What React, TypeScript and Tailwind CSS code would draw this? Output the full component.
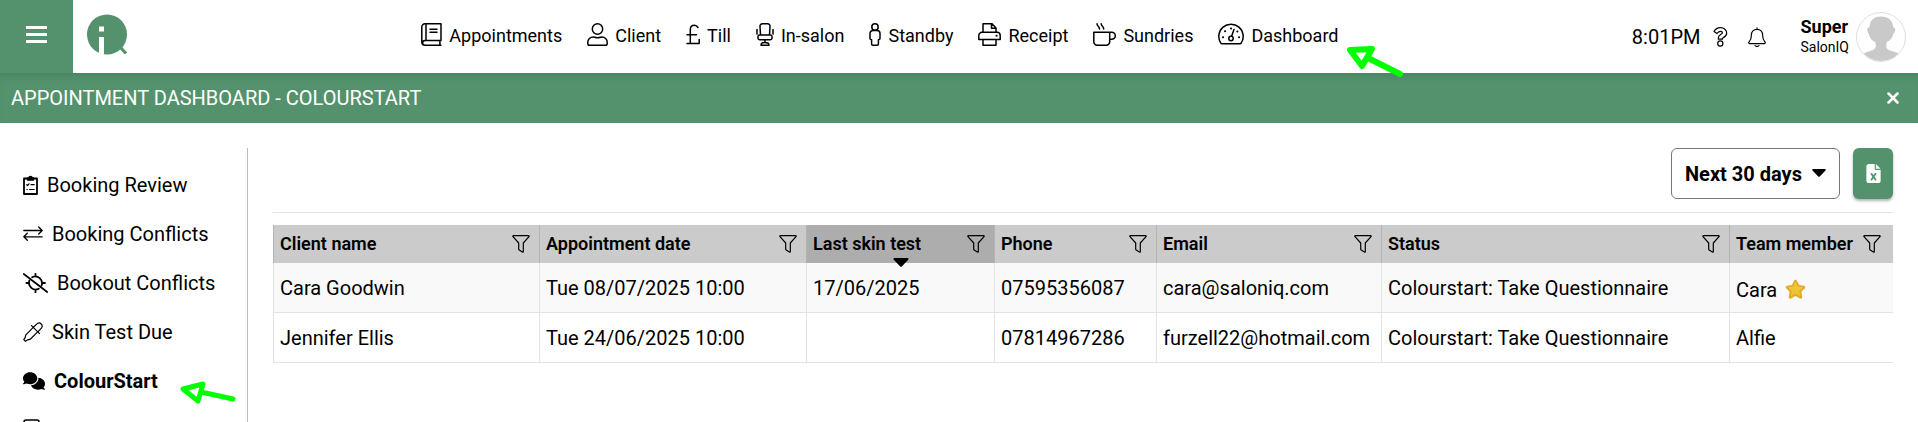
import type { ReactNode } from 'react'
import { FaComments, FaFileExcel } from 'react-icons/fa6'

const Icon = ({
  w,
  h,
  className = '',
  children,
}: {
  w: number
  h: number
  className?: string
  children: ReactNode
}) => (
  <svg
    width={w}
    height={h}
    viewBox={`0 0 ${w} ${h}`}
    fill="none"
    stroke="currentColor"
    strokeWidth="1.5"
    strokeLinecap="round"
    strokeLinejoin="round"
    aria-hidden="true"
    className={`shrink-0 ${className}`}
  >
    {children}
  </svg>
)

const BookIcon = () => (
  <Icon w={21} h={23}>
    <path d="M20 17.5V.8H4A3.2 3.2 0 0 0 .8 4v15A3.2 3.2 0 0 0 4 22.2h16M20 17.5H4a2.3 2.3 0 0 0 0 4.7M18.9 17.5v4.7M5 .8v16.7M9 6.3h7M9 9.2h7" />
  </Icon>
)

const UserIcon = () => (
  <Icon w={21} h={23}>
    <circle cx="10.5" cy="6" r="5.2" />
    <path d="M2.6 22.2h15.8a1.8 1.8 0 0 0 1.8-1.8v-1.2a5.3 5.3 0 0 0-5.3-5.3c-1.2 0-2 .8-4.4.8s-3.2-.8-4.4-.8A5.3 5.3 0 0 0 .8 19.2v1.2a1.8 1.8 0 0 0 1.8 1.8Z" />
  </Icon>
)

const PoundIcon = () => (
  <Icon w={14} h={23}>
    <path d="M12 4.500C11 2.900 9.800 2.300 8.400 2.300 5.700 2.300 4.300 4.200 4.300 6.800V20.200M1 11.700h9.500M1 20.500h12.200v-4" />
  </Icon>
)

const ChairIcon = () => (
  <Icon w={18} h={23}>
    <path d="M4.500 12 4 3.300A2.300 2.300 0 0 1 6.300.8h5.400A2.300 2.300 0 0 1 14 3.300L13.500 12M1 6.500V11M17 6.500V11M3.500 12h11a1.500 1.500 0 0 1 1.500 1.500V15a1.800 1.800 0 0 1-1.800 1.800H3.800A1.800 1.800 0 0 1 2 15v-1.500A1.500 1.500 0 0 1 3.500 12ZM9 17v2.500M5 22.200c0-1.600 1.500-2.700 4-2.700s4 1.100 4 2.700Z" />
  </Icon>
)

const PersonIcon = () => (
  <Icon w={12} h={23}>
    <circle cx="6" cy="4" r="3.200" />
    <path d="M4 7.500h4a3 3 0 0 1 3 3v4.700a1.600 1.600 0 0 1-1.600 1.600V21a1.200 1.200 0 0 1-1.200 1.200H3.800A1.200 1.200 0 0 1 2.600 21v-4.200A1.600 1.600 0 0 1 1 15.200v-4.700a3 3 0 0 1 3-3Z" />
  </Icon>
)

const PrinterIcon = () => (
  <Icon w={23} h={23}>
    <path d="M5 9V.8h9L18 5v4M13.500 1v4.200H18M5 16.500H.8v-4A3.200 3.200 0 0 1 4 9.300h15a3.200 3.200 0 0 1 3.200 3.200v4H18M5 16.500h13v5.700H5Z" />
    <path d="M18.500 12.700h.1" strokeWidth="2" />
  </Icon>
)

const CoffeeIcon = () => (
  <Icon w={23} h={23}>
    <path d="M.8 9.200h15.900v9.500a3.500 3.500 0 0 1-3.500 3.500H4.300a3.500 3.500 0 0 1-3.500-3.500ZM16.700 9.200h2.100a3.400 3.400 0 0 1 0 7h-2.100M4 .8c0 2.700 2.500 2.300 2.500 5.200M8.200.8c0 2.700 2.500 2.300 2.500 5.200" />
  </Icon>
)

const GaugeIcon = () => (
  <Icon w={26} h={23}>
    <path d="M4 20.700h18a1.500 1.500 0 0 0 1.300-.8A12.200 12.200 0 1 0 2.700 19.900a1.500 1.500 0 0 0 1.300.8ZM13.600 13.300 16 6.500" />
    <circle cx="13" cy="15.500" r="2.200" />
    <path d="M5 14.200h.1M7 8.200h.1M13 5.500h.1M19.300 8.500h.1M21 14.200h.1" strokeWidth="2" />
  </Icon>
)

const FilterIcon = () => (
  <Icon w={18} h={18}>
    <path
      d="M1.400.7h15.200c.5 0 .8.6.4 1L11.300 8v8.600c0 .5-.5.8-.9.500L7.200 15a1 1 0 0 1-.5-.8V8L1 1.700C.6 1.300.9.700 1.400.7Z"
      strokeWidth="1.200"
    />
  </Icon>
)

const nav = [
  { label: 'Appointments', icon: <BookIcon /> },
  { label: 'Client', icon: <UserIcon /> },
  { label: 'Till', icon: <PoundIcon /> },
  { label: 'In-salon', icon: <ChairIcon /> },
  { label: 'Standby', icon: <PersonIcon /> },
  { label: 'Receipt', icon: <PrinterIcon /> },
  { label: 'Sundries', icon: <CoffeeIcon /> },
  { label: 'Dashboard', icon: <GaugeIcon /> },
]

const menu = [
  {
    label: 'Booking Review',
    icon: (
      <Icon w={15} h={20}>
        <path d="M1 3.500h13V19H1Z" strokeWidth="1.800" />
        <path d="M4.500 3h1.500a1.500 1.500 0 0 1 3 0h1.500v2h-6Z" fill="currentColor" />
        <path d="m3.700 9.700.8.800 1.500-1.700M8 9.700h3.200M3.900 14.500h.4M6.500 14.500h4.700" strokeWidth="1.200" />
      </Icon>
    ),
  },
  {
    label: 'Booking Conflicts',
    icon: (
      <Icon w={20} h={20}>
        <path d="M.8 6.500h18.400M15.700 3l3.500 3.500-3.500 3.500M19.200 12.800H.8M4.300 9.300.8 12.800l3.500 3.500" strokeWidth="1.300" />
      </Icon>
    ),
  },
  {
    label: 'Bookout Conflicts',
    icon: (
      <Icon w={25} h={20}>
        <path d="m.8 1 23.400 18" strokeWidth="1.700" />
        <path d="M12.500.8v2.600M12.500 16.600v2.700M3.500 10H6M19.300 10h2.700M9.200 4.300a6.700 6.700 0 0 1 9.400 8.200M15.800 15.700A6.700 6.700 0 0 1 6.400 7.500" strokeWidth="1.800" />
      </Icon>
    ),
  },
  {
    label: 'Skin Test Due',
    icon: (
      <Icon w={20} h={20}>
        <path
          d="m10.300 5.200 4-3.600a3.100 3.100 0 0 1 4.300 4.300l-3.700 4M8.500 3.700l8 8M10 5.700l-6.900 6.900c-.8.800-.5 2.300-1.100 3.200L.8 17.600l1.700 1.700 1.800-1.200c.9-.6 2.400-.300 3.200-1.100l6.900-6.900"
          strokeWidth="1.200"
        />
      </Icon>
    ),
  },
  { label: 'ColourStart', icon: <FaComments size={22} className="shrink-0" />, active: true },
]

const columns = [
  { label: 'Client name', width: 'w-[266px]' },
  { label: 'Appointment date', width: 'w-[267px]' },
  { label: 'Last skin test', width: 'w-[188px]', sorted: true },
  { label: 'Phone', width: 'w-[162px]' },
  { label: 'Email', width: 'w-[225px]' },
  { label: 'Status', width: '' },
  { label: 'Team member', width: 'w-[164px]' },
]

const rows = [
  ['Cara Goodwin', 'Tue 08/07/2025 10:00', '17/06/2025', '07595356087', 'cara@saloniq.com', 'Colourstart: Take Questionnaire', 'Cara'],
  ['Jennifer Ellis', 'Tue 24/06/2025 10:00', '', '07814967286', 'furzell22@hotmail.com', 'Colourstart: Take Questionnaire', 'Alfie'],
]

const Star = () => (
  <svg width="21" height="21" viewBox="0 0 21 21" role="img" aria-label="Requested">
    <path
      d="M10.500.7c.8 0 1.200.6 1.500 1.200l2.100 4.200 4.700.7c1.500.2 2 1.500 1 2.500l-3.400 3.500.8 5c.2 1.500-.9 2.300-2.200 1.600l-4.500-2.300-4.500 2.300c-1.300.7-2.400-.1-2.200-1.600l.8-5L1.200 9.300c-1-1-.5-2.300 1-2.500l4.700-.7L9 1.900c.3-.6.700-1.200 1.500-1.200Z"
      fill="#e5a82e"
    />
    <path d="M10.500 2.500 13 7.400l5.200.9-3.900 3.700.9 5-4.700-2.400-4.700 2.400.9-5-3.900-3.700L8 7.400Z" fill="#eec534" />
  </svg>
)

function Header() {
  return (
    <header className="flex h-[73px] shrink-0 items-center">
      <button type="button" aria-label="Menu" className="flex h-full w-[73px] items-center justify-center bg-[#53926d] text-white">
        <svg width="21" height="17" viewBox="0 0 21 17" fill="currentColor" className="mb-1">
          <path d="M0 0h21v3H0zM0 7h21v3H0zM0 14h21v3H0z" />
        </svg>
      </button>
      <svg width="41" height="42" viewBox="0 0 41 42" className="mb-1 ml-3.5" role="img" aria-label="SalonIQ">
        <circle cx="20" cy="20.500" r="20" fill="#53926d" />
        <path d="m35 35 4.500 4.500" stroke="#fff" strokeWidth="7" />
        <path d="m33.500 33.500 5.500 6" stroke="#53926d" strokeWidth="3.200" />
        <path d="M12 12.500h5v5h-5zM12 23h5v18l-5-2z" fill="#fff" />
      </svg>
      <nav className="flex flex-1 justify-center gap-[25px]">
        {nav.map(({ label, icon }) => (
          <a key={label} href="#" className="flex items-center gap-[7px] pb-1 text-lg leading-6">
            {icon}
            <span className="pt-0.5">{label}</span>
          </a>
        ))}
      </nav>
      <div className="flex items-center pr-3">
        <time className="text-xl leading-6">8:01PM</time>
        <button type="button" aria-label="Help" className="ml-3">
          <Icon w={15} h={20}>
            <path
              d="M1 4.500C2.500 2 4.700.7 7.400.7c3.500 0 6.300 2.200 6.300 5.200 0 4.300-4.300 4.300-4.300 5.700v.6H5.300v-1.100c0-3.500 4.100-3.700 4.100-5.300 0-.9-.9-1.500-2-1.500-1.500 0-2.300.8-3.400 2.200Z"
              strokeWidth="1.200"
            />
            <circle cx="7.300" cy="16.500" r="2.600" strokeWidth="1.200" />
          </Icon>
        </button>
        <button type="button" aria-label="Notifications" className="ml-5">
          <Icon w={18} h={20}>
            <path d="M9 .8v1.500M9 2.300c-3.400 0-5.600 2.500-5.600 5.700 0 4.500-1 5.500-2.300 6.900-.7.800-.300 1.700.6 1.700h14.600c.9 0 1.300-.9.600-1.700-1.300-1.400-2.300-2.400-2.300-6.900 0-3.200-2.200-5.700-5.600-5.700ZM7 18.700c.8 1 3.200 1 4 0" strokeWidth="1.200" />
          </Icon>
        </button>
        <div className="ml-[35px]">
          <div className="text-lg leading-5 font-bold">Super</div>
          <div className="text-sm leading-5">SalonIQ</div>
        </div>
        <svg width="50" height="50" viewBox="0 0 50 50" className="ml-[7px]" role="img" aria-label="Super">
          <defs>
            <clipPath id="avatar">
              <circle cx="25" cy="25" r="24" />
            </clipPath>
          </defs>
          <path
            d="M25 4.500C17 4.500 14 9 13.700 14.500c-1.200 1-2.500 2-2.500 3.500s.8 2.500 1.500 4c1 4 3 6.500 6.500 8 .8 3 1 6-1.200 7.500-4 2-8.500 2-11.500 5.500L12 50h26l6-7c-3-3.500-8-3.500-12-5.500-2.200-1.500-2-4.500-1.200-7.500 3.500-1.500 5.500-4 6.500-8 1-1.500 2.500-3 2-4.500s-1.500-1.500-2.300-3C36.500 9 33 4.500 25 4.500Z"
            fill="#c9c9c9"
            clipPath="url(#avatar)"
          />
          <circle cx="25" cy="25" r="24.500" fill="none" stroke="#dedede" />
        </svg>
      </div>
    </header>
  )
}

function Sidebar() {
  return (
    <aside className="w-[248px] shrink-0 border-r border-[#bdbdbd] pt-3">
      <ul className="pl-[23px]">
        {menu.map(({ label, icon, active }) => (
          <li key={label} className="h-[49px]">
            <a href="#" className={`flex h-full items-center gap-[9px] text-xl leading-6 ${active ? 'font-bold' : ''}`}>
              {icon}
              {label}
            </a>
          </li>
        ))}
        <li className="pt-[14px]">
          <a href="#" aria-label="More">
            <Icon w={17} h={20}>
              <rect x="1" y="1" width="15" height="18" rx="2" />
            </Icon>
          </a>
        </li>
      </ul>
    </aside>
  )
}

function AppointmentsTable() {
  return (
    <table className="w-full table-fixed border-separate border-spacing-0 text-left">
      <thead>
        <tr>
          {columns.map(({ label, width, sorted }) => (
            <th
              key={label}
              className={`relative h-[38px] border-l border-[#b3b3b3] p-0 pr-[9px] pl-[6px] text-lg leading-6 font-semibold last:pr-3 ${width} ${sorted ? 'bg-[#adadad]' : 'bg-[#cbcbcb]'}`}
            >
              <div className="flex items-center justify-between whitespace-nowrap">
                {label}
                <button type="button" aria-label={`Filter ${label}`}>
                  <FilterIcon />
                </button>
              </div>
              {sorted && (
                <svg width="16" height="9" viewBox="0 0 16 9" className="absolute top-[33px] left-1/2 z-10 -translate-x-1/2">
                  <path d="M1.500 0h13c1 0 1.300 1 .7 1.700L9 8.300c-.6.700-1.400.7-2 0L.8 1.700C.2 1 .5 0 1.500 0Z" />
                </svg>
              )}
            </th>
          ))}
        </tr>
      </thead>
      <tbody>
        {rows.map((row, i) => (
          <tr key={row[0]} className="odd:bg-[#f9f9f9]">
            {row.map((cell, j) => (
              <td key={columns[j].label} className="h-[50px] border-b border-l border-[#e3e3e3] p-0 pl-[6px] text-xl leading-6 whitespace-nowrap">
                {i === 0 && j === 6 ? (
                  <div className="flex items-center gap-2 pt-1">
                    {cell}
                    <Star />
                  </div>
                ) : (
                  cell
                )}
              </td>
            ))}
          </tr>
        ))}
      </tbody>
    </table>
  )
}

export default function App() {
  return (
    <div className="relative flex h-screen flex-col overflow-hidden bg-white font-['Roboto',sans-serif] text-black">
      <Header />
      <div className="flex h-[50px] shrink-0 items-center justify-between bg-[#53926d] pr-[19px] pl-[11px] text-white shadow-[inset_0_8px_8px_-6px_rgba(0,0,0,0.12)]">
        <h1 className="text-xl leading-6">APPOINTMENT DASHBOARD - COLOURSTART</h1>
        <button type="button" aria-label="Close">
          <Icon w={12} h={12}>
            <path d="m1.500 1.500 9 9M10.500 1.500l-9 9" strokeWidth="2.500" />
          </Icon>
        </button>
      </div>
      <div className="flex flex-1 pt-[25px]">
        <Sidebar />
        <main className="min-w-0 flex-1 pr-[25px] pl-[25px]">
          <div className="flex justify-end gap-[13px] border-b border-[#e3e3e3] pb-[13px]">
            <div className="relative">
              <select
                aria-label="Period"
                className="h-[51px] w-[169px] appearance-none rounded-md border border-[#777] bg-white pl-[13px] text-xl font-bold"
              >
                <option>Next 30 days</option>
              </select>
              <svg width="14" height="8" viewBox="0 0 14 8" className="pointer-events-none absolute top-[21px] right-[14px]">
                <path d="M1.200 0h11.600c1 0 1.300.9.700 1.500L8 7.300c-.6.700-1.400.7-2 0L.5 1.500C-.1.9.2 0 1.200 0Z" />
              </svg>
            </div>
            <button
              type="button"
              aria-label="Export to Excel"
              className="flex h-[51px] w-10 items-center justify-center rounded-md bg-[#53926d] text-white shadow-[0_2px_3px_rgba(0,0,0,0.3)]"
            >
              <FaFileExcel size={19} />
            </button>
          </div>
          <div className="pt-3">
            <AppointmentsTable />
          </div>
        </main>
      </div>
      <svg width="58" height="34" viewBox="0 0 58 34" className="pointer-events-none absolute top-[45px] left-[1346px]">
        <path d="M54 29 22 13M4 5l22-1-10 17Z" fill="none" stroke="#0f0" strokeWidth="6" strokeLinecap="round" strokeLinejoin="round" />
      </svg>
      <svg width="58" height="26" viewBox="0 0 58 26" className="pointer-events-none absolute top-[380px] left-[179px]">
        <path d="M54 19 22 12M4 9l20-5-5 17Z" fill="none" stroke="#0f0" strokeWidth="5" strokeLinecap="round" strokeLinejoin="round" />
      </svg>
    </div>
  )
}
